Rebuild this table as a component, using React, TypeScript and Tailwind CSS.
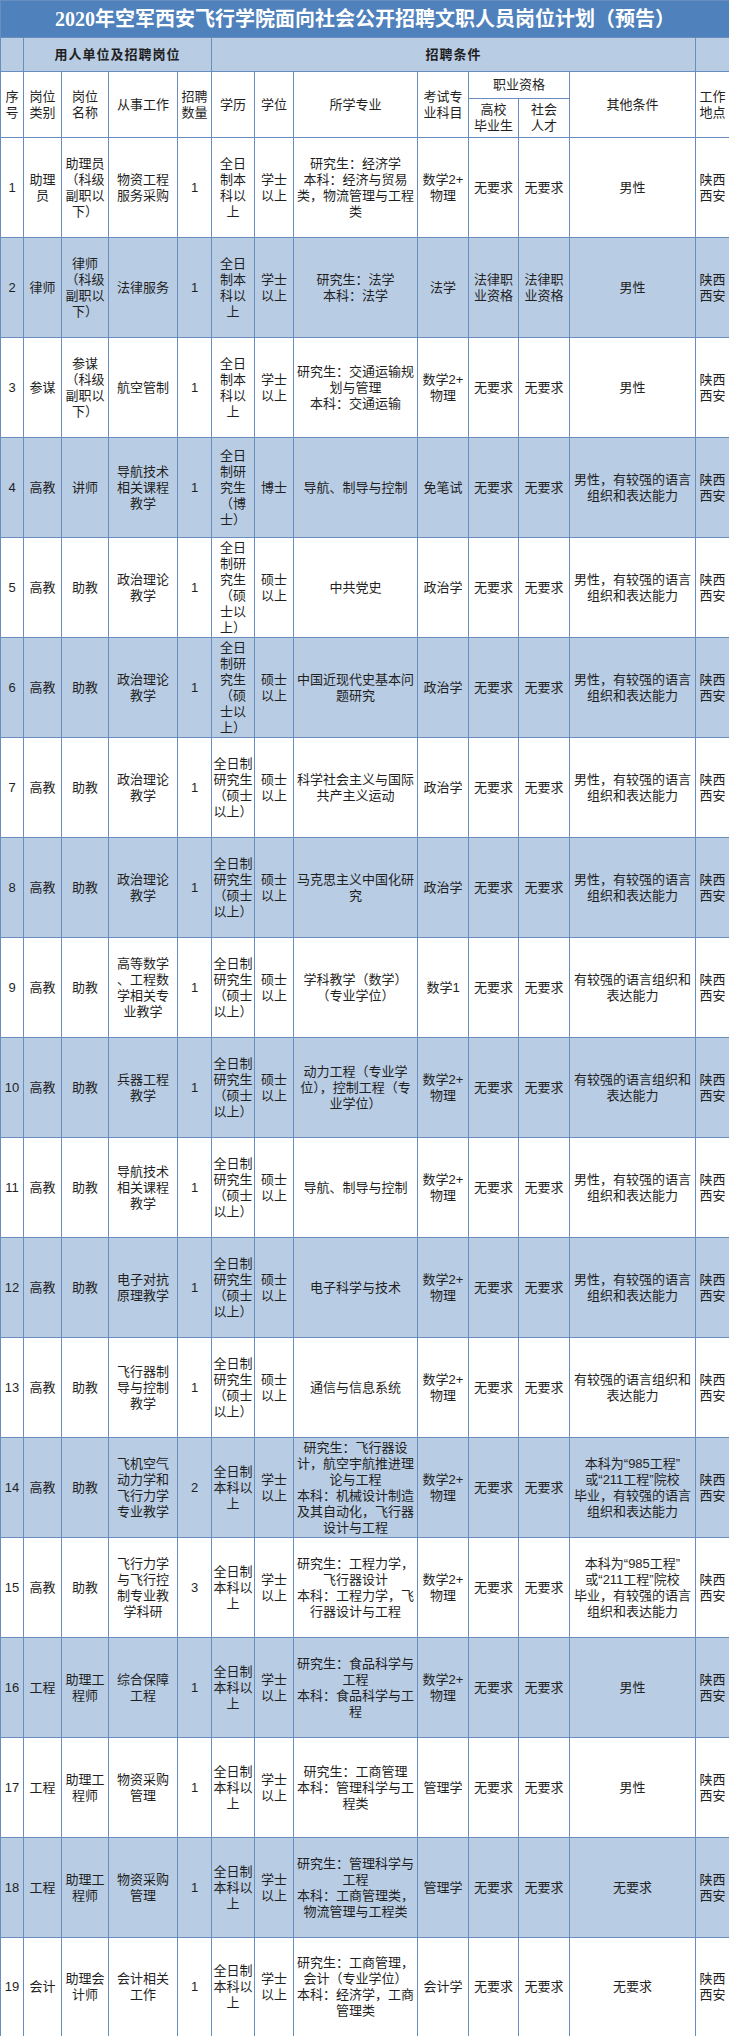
const cols = [
  'w-[23px]',
  'w-[38px]',
  'w-[47px]',
  'w-[69px]',
  'w-[34px]',
  'w-[43px]',
  'w-[39px]',
  'w-[124px]',
  'w-[51px]',
  'w-[50px]',
  'w-[51px]',
  'w-[126px]',
  'w-[34px]',
]

const BEN2 = '全日\n制本\n科以\n上'
const BEN3 = '全日制\n本科以\n上'
const BOSHI = '全日\n制研\n究生\n（博\n士）'
const SHUO2 = '全日\n制研\n究生\n（硕\n士以\n上）'
const SHUO3 = '全日制\n研究生\n（硕士\n以上）'
const XS = '学士\n以上'
const SS = '硕士\n以上'
const M2 = '数学2+\n物理'
const NO = '无要求'
const XA = '陕西\n西安'
const NAN = '男性，有较强的语言\n组织和表达能力'
const YU = '有较强的语言组织和\n表达能力'
const G985 = '本科为“985工程”\n或“211工程”院校\n毕业，有较强的语言\n组织和表达能力'

const rows: string[][] = [
  ['1', '助理\n员', '助理员\n（科级\n副职以\n下）', '物资工程\n服务采购', '1', BEN2, XS, '研究生：经济学\n本科：经济与贸易\n类，物流管理与工程\n类', M2, NO, NO, '男性', XA],
  ['2', '律师', '律师\n（科级\n副职以\n下）', '法律服务', '1', BEN2, XS, '研究生：法学\n本科：法学', '法学', '法律职\n业资格', '法律职\n业资格', '男性', XA],
  ['3', '参谋', '参谋\n（科级\n副职以\n下）', '航空管制', '1', BEN2, XS, '研究生：交通运输规\n划与管理\n本科：交通运输', M2, NO, NO, '男性', XA],
  ['4', '高教', '讲师', '导航技术\n相关课程\n教学', '1', BOSHI, '博士', '导航、制导与控制', '免笔试', NO, NO, NAN, XA],
  ['5', '高教', '助教', '政治理论\n教学', '1', SHUO2, SS, '中共党史', '政治学', NO, NO, NAN, XA],
  ['6', '高教', '助教', '政治理论\n教学', '1', SHUO2, SS, '中国近现代史基本问\n题研究', '政治学', NO, NO, NAN, XA],
  ['7', '高教', '助教', '政治理论\n教学', '1', SHUO3, SS, '科学社会主义与国际\n共产主义运动', '政治学', NO, NO, NAN, XA],
  ['8', '高教', '助教', '政治理论\n教学', '1', SHUO3, SS, '马克思主义中国化研\n究', '政治学', NO, NO, NAN, XA],
  ['9', '高教', '助教', '高等数学\n、工程数\n学相关专\n业教学', '1', SHUO3, SS, '学科教学（数学）\n（专业学位）', '数学1', NO, NO, YU, XA],
  ['10', '高教', '助教', '兵器工程\n教学', '1', SHUO3, SS, '动力工程（专业学\n位），控制工程（专\n业学位）', M2, NO, NO, YU, XA],
  ['11', '高教', '助教', '导航技术\n相关课程\n教学', '1', SHUO3, SS, '导航、制导与控制', M2, NO, NO, NAN, XA],
  ['12', '高教', '助教', '电子对抗\n原理教学', '1', SHUO3, SS, '电子科学与技术', M2, NO, NO, NAN, XA],
  ['13', '高教', '助教', '飞行器制\n导与控制\n教学', '1', SHUO3, SS, '通信与信息系统', M2, NO, NO, YU, XA],
  ['14', '高教', '助教', '飞机空气\n动力学和\n飞行力学\n专业教学', '2', BEN3, XS, '研究生：飞行器设\n计，航空宇航推进理\n论与工程\n本科：机械设计制造\n及其自动化，飞行器\n设计与工程', M2, NO, NO, G985, XA],
  ['15', '高教', '助教', '飞行力学\n与飞行控\n制专业教\n学科研', '3', BEN3, XS, '研究生：工程力学，\n飞行器设计\n本科：工程力学，飞\n行器设计与工程', M2, NO, NO, G985, XA],
  ['16', '工程', '助理工\n程师', '综合保障\n工程', '1', BEN3, XS, '研究生：食品科学与\n工程\n本科：食品科学与工\n程', M2, NO, NO, '男性', XA],
  ['17', '工程', '助理工\n程师', '物资采购\n管理', '1', BEN3, XS, '研究生：工商管理\n本科：管理科学与工\n程类', '管理学', NO, NO, '男性', XA],
  ['18', '工程', '助理工\n程师', '物资采购\n管理', '1', BEN3, XS, '研究生：管理科学与\n工程\n本科：工商管理类，\n物流管理与工程类', '管理学', NO, NO, NO, XA],
  ['19', '会计', '助理会\n计师', '会计相关\n工作', '1', BEN3, XS, '研究生：工商管理，\n会计（专业学位）\n本科：经济学，工商\n管理类', '会计学', NO, NO, NO, XA],
]

const cell = 'border border-[#6a8dc0] px-[1px] text-center align-middle whitespace-pre'

export default function App() {
  return (
    <div className="w-[729px] bg-white text-[#1f1f1f]">
      <table className="w-[729px] table-fixed border-collapse font-['Liberation_Sans','Noto_Sans_CJK_SC',sans-serif] text-[13px] leading-[16px]">
        <colgroup>
          {cols.map((c, i) => (
            <col key={i} className={c} />
          ))}
        </colgroup>
        <tbody>
          <tr className="h-[37px]">
            <td
              colSpan={13}
              className="border border-[#6a8dc0] bg-[#4f81bd] text-center align-middle font-['Liberation_Serif','Noto_Sans_CJK_SC',serif] text-[20px] font-bold text-white"
            >
              2020年空军西安飞行学院面向社会公开招聘文职人员岗位计划（预告）
            </td>
          </tr>
          <tr className="h-[34px] bg-[#b8cce4] font-bold">
            <td className={cell}></td>
            <td colSpan={4} className={`${cell} tracking-[1px]`}>
              用人单位及招聘岗位
            </td>
            <td colSpan={7} className={`${cell} tracking-[1px]`}>
              招聘条件
            </td>
            <td className={cell}></td>
          </tr>
          <tr className="h-[27px]">
            <td rowSpan={2} className={cell}>{'序\n号'}</td>
            <td rowSpan={2} className={cell}>{'岗位\n类别'}</td>
            <td rowSpan={2} className={cell}>{'岗位\n名称'}</td>
            <td rowSpan={2} className={cell}>从事工作</td>
            <td rowSpan={2} className={cell}>{'招聘\n数量'}</td>
            <td rowSpan={2} className={cell}>学历</td>
            <td rowSpan={2} className={cell}>学位</td>
            <td rowSpan={2} className={cell}>所学专业</td>
            <td rowSpan={2} className={cell}>{'考试专\n业科目'}</td>
            <td colSpan={2} className={cell}>职业资格</td>
            <td rowSpan={2} className={cell}>其他条件</td>
            <td rowSpan={2} className={cell}>{'工作\n地点'}</td>
          </tr>
          <tr className="h-[39px]">
            <td className={cell}>{'高校\n毕业生'}</td>
            <td className={cell}>{'社会\n人才'}</td>
          </tr>
          {rows.map((r, i) => (
            <tr
              key={i}
              className={`${i === rows.length - 1 ? 'h-[99px]' : 'h-[100px]'} ${i % 2 === 1 ? 'bg-[#b8cce4]' : 'bg-white'}`}
            >
              {r.map((v, j) => (
                <td key={j} className={cell}>
                  {v}
                </td>
              ))}
            </tr>
          ))}
        </tbody>
      </table>
    </div>
  )
}
